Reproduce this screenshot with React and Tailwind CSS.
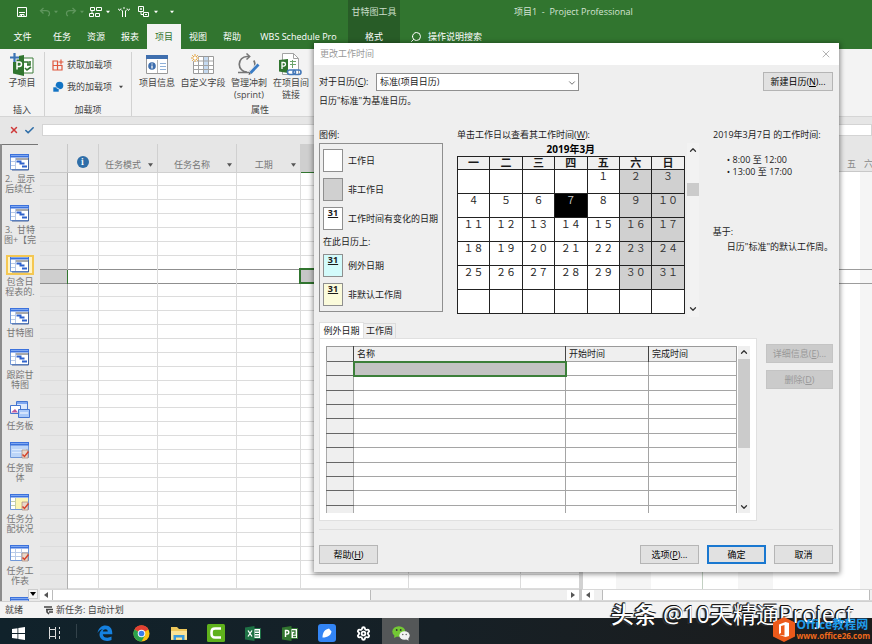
import React, { useState } from 'react'
import clsx from 'clsx'
import { Search, ChevronDown, ChevronUp, X, Check, Settings } from 'lucide-react'

/* ---------- icons ---------- */

function SaveIcon() {
  return (
    <svg width="12" height="12" viewBox="0 0 12 12" fill="none" stroke="#fff">
      <path d="M1.5 1.5h9v9h-9z" />
      <path d="M3 6.5h6M4 8.5h4v2H4z" />
      <path d="M5 9.5h1" />
    </svg>
  )
}

function UndoIcon({ flip }) {
  return (
    <svg width="12" height="10" viewBox="0 0 12 10" fill="none" stroke="#5f965d" strokeWidth="1.3" className={clsx(flip && '-scale-x-100')}>
      <path d="M4.5 1L1.5 3.7l3 2.8M1.8 3.7H7c2 0 3.5 1.3 3.5 3 0 1.2-.6 2-1.5 2.3" />
    </svg>
  )
}

function LinkTasksIcon() {
  return (
    <svg width="13" height="12" viewBox="0 0 13 12" fill="none" stroke="#fff">
      <path d="M1.5 1.5h4v3h-4zM7.5 1.5h5v3h-5zM.5 7.5h4v3h-4zM6.500 7.500h4v3h-4zM3 4.500v3" />
    </svg>
  )
}

function UnlinkIcon() {
  return (
    <svg width="12" height="12" viewBox="0 0 12 12" fill="none" stroke="#fff">
      <path d="M0 2.500l1.500 2L3 2.500M9 2.500l1.500 2 1.500-2M4.500 11V5L3 3.500M7.500 11V5L9 3.500M6 1v2" />
    </svg>
  )
}

function OutlineIcon() {
  return (
    <svg width="12" height="12" viewBox="0 0 12 12" fill="none" stroke="#fff">
      <path d="M.5 .5h5v5h-5zM2 3h2M3 2v2M5.500 6.500h5v4h-5zM3 6v2.500h2M7 8.500h2" />
    </svg>
  )
}

function SubprojectIcon() {
  return (
    <svg width="24" height="24" viewBox="0 0 24 24">
      <path d="M12 5h11v15H12z" fill="#fff" stroke="#3f7f3c" />
      <path d="M14 9h4v3M20 8v4h-3M15 15l2 2 4-3" fill="none" stroke="#31752f" strokeWidth="1.600" />
      <path d="M3 4l11-2v21L3 20.500z" fill="#31752f" />
      <path d="M7 16.500V9h2.300a2.200 2.200 0 010 4.400H7" fill="none" stroke="#fff" strokeWidth="1.500" />
      <path d="M4.500 0v9M0 4.500h9" stroke="#f3f3f3" strokeWidth="4" />
      <path d="M4.500 0v9M0 4.500h9" stroke="#3a73b5" strokeWidth="2.200" />
    </svg>
  )
}

function StoreIcon() {
  return (
    <svg width="12" height="12" viewBox="0 0 12 12" fill="none" stroke="#e0583e" strokeWidth="1.200">
      <path d="M1 2h4.500v9H1zM1 6.500h9V11H1zM9 .5v5M6.500 3h5" />
    </svg>
  )
}

function MyAddinsIcon() {
  return (
    <svg width="12" height="12" viewBox="0 0 12 12" fill="#1273c4">
      <circle cx="7.500" cy="4.500" r="3.800" />
      <path d="M1 6h4v1.500h2V11H1z" stroke="#f3f3f3" strokeWidth=".6" />
    </svg>
  )
}

function ProjectInfoIcon() {
  return (
    <svg width="24" height="22" viewBox="0 0 24 22">
      <path d="M1.500 1.500h21v18h-21z" fill="#fff" stroke="#9a9a9a" />
      <path d="M1 1h22v4H1z" fill="#3f6fae" />
      <circle cx="7" cy="12" r="3.800" fill="#3f6fae" />
      <path d="M7 9.500v1M7 11.500v3" stroke="#fff" strokeWidth="1.300" />
      <path d="M12.500 6v13" stroke="#b5b5b5" />
      <path d="M15 9.500h6M15 12.500h6M15 15.500h6" stroke="#8fb0d8" />
    </svg>
  )
}

function CustomFieldIcon() {
  return (
    <svg width="24" height="22" viewBox="0 0 24 22" fill="none">
      <path d="M2.500 2.500h20v17h-20z" fill="#fff" stroke="#9a9a9a" />
      <path d="M13 3h4.500v16H13z" fill="#c5daf1" />
      <path d="M2.500 7h20M2.500 11.500h20M2.500 15.500h20M7.500 3v16M12.500 3v16M17.500 3v16" stroke="#a3a3a3" />
      <circle cx="4" cy="4" r="3.500" fill="#f3f3f3" />
      <path d="M4 0v8M0 4h8M1.200 1.200l5.600 5.600M6.800 1.200L1.200 6.800" stroke="#e5a33c" />
      <circle cx="4" cy="4" r="1.500" fill="#fff" />
    </svg>
  )
}

function SprintIcon() {
  return (
    <svg width="24" height="23" viewBox="0 0 24 23" fill="none">
      <path d="M12 3.500H10a7.500 7.500 0 000 15.500M12.500 18.500A7.500 7.500 0 0016.800 7.500M1 19.500h14" stroke="#767676" strokeWidth="1.700" />
      <path d="M9.500 .5l3.200 3-3.200 3" stroke="#767676" strokeWidth="1.500" />
      <path d="M13.500 20l8-8.500" stroke="#f3f3f3" strokeWidth="4.500" />
      <path d="M13.500 20l8-8.500" stroke="#3a7cc5" strokeWidth="2.800" />
      <path d="M11.500 22l.800-2.600 1.700 1.600z" fill="#555" />
    </svg>
  )
}

function LinkProjectsIcon() {
  return (
    <svg width="24" height="24" viewBox="0 0 24 24" fill="none">
      <path d="M3.500.500h11l5 5v16h-16z" fill="#fff" stroke="#a3a3a3" />
      <path d="M14.500.500v5h5" stroke="#a3a3a3" />
      <path d="M11 8.500h6M11 11.500h6M13.500 7v8" stroke="#6da46b" />
      <path d="M0 7l9-1v14l-9-1.500z" fill="#31752f" />
      <path d="M3 16V9.500h1.700a1.700 1.700 0 010 3.600H3" stroke="#fff" strokeWidth="1.300" />
      <rect x="8.500" y="17" width="8" height="4.500" rx="2.200" stroke="#4478b8" strokeWidth="1.600" />
      <rect x="14" y="17" width="8" height="4.500" rx="2.200" stroke="#4478b8" strokeWidth="1.600" />
    </svg>
  )
}

function ViewIcon({ kind }) {
  if (kind === 'board') {
    return (
      <svg width="20" height="17" viewBox="0 0 20 17">
        <path d="M6.500.500h11v8h-11z" fill="#dbe8fc" stroke="#4676cf" />
        <path d="M7 1h10v2H7z" fill="#7ea7f0" />
        <path d="M.5 4.500h10v8H.5z" fill="#fff" stroke="#4676cf" />
        <path d="M1 11.500l4-3.500 3 3.500z" fill="#c05a9a" />
        <path d="M8.500 8.500h11v8h-11z" fill="#a9c8f8" stroke="#4676cf" />
        <path d="M10 12h8" stroke="#fff" />
      </svg>
    )
  }
  return (
    <svg width="20" height="17" viewBox="0 0 20 17">
      <path d="M.5.500h18v15H.5z" fill={kind === 'form' ? '#bcd5f8' : '#fff'} stroke="#6f97d8" />
      <path d="M0 0h19v3.500H0z" fill="#3c72dc" />
      <path d="M1 1h17v1H1z" fill="#7ea7f0" />
      {kind === 'gantt' && (
        <>
          <path d="M5.500 4v11M1 7.500h4M1 11.500h4" stroke="#b9cbe8" />
          <path d="M6 5h12" stroke="#555" />
          <path d="M6.500 7.500h5M9.500 9.500h5M12 12.500h5" stroke="#2f62cc" strokeWidth="2" />
          <path d="M18.500 4v12H2" fill="none" stroke="#44639e" />
        </>
      )}
      {kind === 'form' && <path d="M2 7.500h14M2 10.500h10" stroke="#dceafd" />}
      {kind === 'usage' && (
        <>
          <path d="M6 4h12v11H6z" fill="#fcf6b4" />
          <path d="M5.500 4v11M1 7.500h4M1 11.500h4" stroke="#c4cfa8" />
        </>
      )}
      {kind === 'sheet' && <path d="M5.500 4v11M11.500 4v11M1 7.500h17M1 11.500h17" stroke="#b9cbe8" />}
      {kind !== 'gantt' && (
        <>
          <path d="M12 8h6v8h-6z" fill="#e9d8cb" stroke="#9d7a66" strokeWidth=".6" />
          <path d="M12.500 12.500l2 2 4-5" fill="none" stroke="#d5432c" strokeWidth="1.500" />
        </>
      )}
    </svg>
  )
}

function Caret({ className }) {
  return (
    <svg width="6" height="4" viewBox="0 0 6 4" fill="currentColor" className={className}>
      <path d="M0 0h6L3 4z" />
    </svg>
  )
}

function SideArrow({ left }) {
  return (
    <svg width="4" height="6" viewBox="0 0 4 6" fill="#555">
      <path d={left ? 'M4 0v6L0 3z' : 'M0 0v6l4-3z'} />
    </svg>
  )
}

/* ---------- data ---------- */

const TABS = ['任务', '资源', '报表', '项目', '视图', '帮助']

const VIEWS = [
  { kind: 'gantt', label: '2.  显示\n后续任.' },
  { kind: 'gantt', label: '3.  甘特\n图+【完' },
  { kind: 'gantt', label: '包含日\n程表的.', active: true },
  { kind: 'gantt', label: '甘特图' },
  { kind: 'gantt', label: '跟踪甘\n特图' },
  { kind: 'board', label: '任务板' },
  { kind: 'form', label: '任务窗\n体' },
  { kind: 'usage', label: '任务分\n配状况' },
  { kind: 'sheet', label: '任务工\n作表' },
]

const WEEKDAYS = ['一', '二', '三', '四', '五', '六', '日']

// March 2019 starts on a Friday
const WEEKS = Array.from({ length: 6 }, (_, w) =>
  Array.from({ length: 7 }, (_, d) => {
    const day = w * 7 + d - 3
    return day >= 1 && day <= 31 ? day : null
  })
)

/* ---------- main window ---------- */

function TitleBar() {
  return (
    <div className="flex h-6 items-stretch">
      <div className="flex w-[348px] items-center pl-4 text-white">
        <button aria-label="保存" className="mr-[11px]"><SaveIcon /></button>
        <button aria-label="撤消" className="mr-[7px] flex items-center gap-[3px] text-[#5f965d]"><UndoIcon /><Caret className="w-1" /></button>
        <button aria-label="恢复" className="mr-[5px] flex items-center gap-[3px] text-[#5f965d]"><UndoIcon flip /><Caret className="w-1" /></button>
        <button aria-label="链接任务" className="mr-2 flex items-center gap-1"><LinkTasksIcon /><Caret className="w-1" /></button>
        <button aria-label="取消链接" className="mr-2"><UnlinkIcon /></button>
        <button aria-label="大纲" className="mr-3 flex items-center gap-1"><OutlineIcon /><Caret className="w-1" /></button>
        <button aria-label="自定义工具栏"><Caret className="w-1" /></button>
      </div>
      <div className="flex w-[52px] items-center justify-center whitespace-nowrap bg-[#285c27] text-[#c9dcc8]">甘特图工具</div>
      <div className="flex flex-1 items-center pl-[114px] text-[#d5e4d4]">项目1&nbsp; -&nbsp; Project Professional</div>
    </div>
  )
}

function RibbonTabs() {
  return (
    <div className="flex h-[25px] items-stretch text-white">
      <button className="w-[45px]">文件</button>
      {TABS.map(t => (
        <button key={t} className={clsx('w-[34px]', t === '项目' && 'bg-[#f3f3f3] text-[#31752f]')}>{t}</button>
      ))}
      <button className="w-[99px] whitespace-nowrap">WBS Schedule Pro</button>
      <button className="w-[52px] bg-[#285c27]">格式</button>
      <button className="flex items-center gap-1.5 pl-2.5">
        <Search size={12} className="-scale-x-100" />
        操作说明搜索
      </button>
    </div>
  )
}

function RibbonButton({ icon, label, className }) {
  return (
    <button className={clsx('flex flex-col items-center leading-3', className)}>
      <span className="flex h-[25px] items-center">{icon}</span>
      <span className="whitespace-pre">{label}</span>
    </button>
  )
}

function Ribbon() {
  return (
    <div className="flex h-[68px] items-stretch border-b border-[#d5d5d5] bg-[#f3f3f3] pt-[3px] text-[#444]">
      <div className="flex w-[45px] flex-col items-center justify-between border-r border-[#d2d2d2]">
        <RibbonButton icon={<SubprojectIcon />} label="子项目" />
        <div className="leading-3">插入</div>
      </div>
      <div className="flex w-[87px] flex-col justify-between border-r border-[#d2d2d2]">
        <div className="flex flex-col gap-2.5 pl-[7px] pt-[7px]">
          <button className="flex items-center gap-[3px] leading-3"><StoreIcon />获取加载项</button>
          <button className="flex items-center gap-[3px] leading-3"><MyAddinsIcon />我的加载项<Caret className="ml-1 w-1" /></button>
        </div>
        <div className="text-center leading-3">加载项</div>
      </div>
      <div className="flex w-[256px] flex-col justify-between">
        <div className="flex items-start pl-[3px]">
          <RibbonButton className="w-11" icon={<ProjectInfoIcon />} label="项目信息" />
          <RibbonButton className="w-12" icon={<CustomFieldIcon />} label="自定义字段" />
          <RibbonButton className="w-11" icon={<SprintIcon />} label={'管理冲刺\n(sprint)'} />
          <RibbonButton className="w-10" icon={<LinkProjectsIcon />} label={'在项目间\n链接'} />
        </div>
        <div className="text-center leading-3">属性</div>
      </div>
    </div>
  )
}

function ViewBar() {
  return (
    <nav className="relative flex w-10 flex-col overflow-hidden border-l-2 border-[#8c8c8c] bg-[#e9e9e9] text-[#777]">
      <div className="mr-0.5 flex flex-1 flex-col items-center justify-between border-t border-[#777] pt-[9px]">
        {VIEWS.map(v => (
          <button key={v.label} className="flex flex-col items-center leading-[10px]">
            <span className={clsx('mb-1 flex h-4 items-center px-0.5', v.active && 'bg-[#fff3c4] outline-2 outline-[#f4c752]')}>
              <ViewIcon kind={v.kind} />
            </span>
            <span className="whitespace-pre">{v.label}</span>
          </button>
        ))}
        {/* next entry, cut off by the window edge */}
        <div className="h-1 w-5 overflow-hidden"><ViewIcon kind="sheet" /></div>
      </div>
      <button aria-label="更多视图" className="absolute bottom-0.5 right-0.5 flex size-2.5 items-center justify-center border border-[#ccc] bg-[#f5f5f5] text-black">
        <Caret />
      </button>
    </nav>
  )
}

function TaskTable() {
  const heads = ['任务模式', '任务名称', '工期']
  return (
    <table className="h-full w-full table-fixed border-collapse bg-white">
      <colgroup>
        <col className="w-[27px]" />
        <col className="w-[31px]" />
        <col className="w-[59px]" />
        <col className="w-[79px]" />
        <col className="w-16" />
        <col className="w-[108px]" />
        <col className="w-28" />
        <col />
      </colgroup>
      <thead>
        <tr className="h-7 bg-[#e6e6e6] align-bottom text-[#777]">
          <th className="border-b border-[#c8c8c8]" />
          <th className="border-b border-l border-[#c8c8c8] pb-1">
            <span className="mx-auto flex size-3 items-center justify-center rounded-full bg-[#2f6ea8] font-serif text-[9px] font-bold leading-3 text-white">i</span>
          </th>
          {heads.map(h => (
            <th key={h} className="border-b border-l border-[#d0d0d0] font-normal">
              <div className="flex items-center justify-between pb-px pr-1 leading-3">
                <span className="flex-1 whitespace-nowrap text-center">{h}</span>
                <Caret className="w-[5px] text-[#555]" />
              </div>
            </th>
          ))}
          <th className="border-b border-b-[#31752f] bg-[#cfcfcf]" />
          <th className="border-b border-l border-[#d0d0d0]" />
          <th className="border-b border-l border-[#d0d0d0]" />
        </tr>
      </thead>
      <tbody>
        {Array.from({ length: 30 }, (_, r) => {
          const active = r === 7
          return (
            <tr key={r} className={clsx('border-b', active || r === 6 ? 'border-[#8f8f8f]' : 'border-[#dcdcdc]')}>
              <td className={clsx('border-r p-0', active ? 'border-r-[#31752f] bg-[#cfcfcf]' : 'border-r-[#b0b0b0] bg-[#e6e6e6]')} />
              {Array.from({ length: 4 }, (_, c) => <td key={c} className="border-r border-r-[#dcdcdc] p-0" />)}
              <td className={clsx('border-r border-r-[#dcdcdc] p-0', active && 'bg-[#c6c6c6] outline-2 -outline-offset-1 outline-[#31752f]')} />
              <td className="border-r border-r-[#dcdcdc] p-0" />
              <td className="p-0" />
            </tr>
          )
        })}
      </tbody>
    </table>
  )
}

function Timeline() {
  // week / weekend stripes under the day header
  return (
    <div className="flex flex-1 flex-col border-l-4 border-[#d2d2d2] bg-white">
      <div className="flex h-7 items-end justify-end gap-2 overflow-hidden border-b border-[#c8c8c8] bg-[#e6e6e6] pb-px leading-3 text-[#888]">
        <span>五</span>
        <span className="-mr-px">六</span>
      </div>
      <div className="relative flex flex-1">
        <div className="w-[33px]" />
        <div className="w-[35px] bg-[#f5f5f5]" />
        <div className="w-[52px] border-r border-[#c2d0c2]" />
        <div className="w-[35px]" />
        <div className="w-[35px] bg-[#f5f5f5]" />
        <div className="flex-1" />
        <div className="w-3 bg-[#f5f5f5]" />
        <div className="absolute inset-x-0 top-[97px] h-[15px] border-y border-[#9c9c9c]" />
      </div>
    </div>
  )
}

function HScroll() {
  return (
    <div className="flex h-3 items-stretch bg-[#f0f0f0]">
      <div className="flex w-[539px] border-y border-[#d8d8d8]">
        <button aria-label="向左滚动" className="flex w-3 items-center justify-center bg-white"><SideArrow left /></button>
        <div className="w-[319px] border border-y-0 border-[#bbb] bg-white" />
        <div className="flex-1" />
        <button aria-label="向右滚动" className="flex w-3 items-center justify-center bg-white"><SideArrow /></button>
      </div>
      <div className="w-[3px] bg-[#c8c8c8]" />
      <div className="flex flex-1 border-y border-[#d8d8d8] pr-[2px]">
        <button aria-label="向左滚动" className="flex w-3 items-center justify-center bg-white"><SideArrow left /></button>
        <div className="ml-2 flex-1 border border-y-0 border-[#bbb] bg-white" />
      </div>
    </div>
  )
}

/* ---------- dialog ---------- */

function DialogButton({ children, primary, className, ...rest }) {
  return (
    <button
      className={clsx(
        'flex h-[19px] items-center justify-center whitespace-nowrap bg-[#e1e1e1] text-black disabled:border-[#c4c4c4] disabled:bg-[#cbcbcb] disabled:text-[#999]',
        primary ? 'border-2 border-[#1a78d0]' : 'border border-[#b5b5b5]',
        className
      )}
      {...rest}
    >
      {children}
    </button>
  )
}

function LegendRow({ color, mark, children }) {
  return (
    <div className="flex items-center gap-[5px] whitespace-nowrap">
      <span className={clsx('flex h-[23px] w-5 items-start justify-center border border-[#8f8f8f] font-bold leading-[10px] underline', color)}>
        {mark && '31'}
      </span>
      {children}
    </div>
  )
}

function Calendar() {
  const [selected, setSelected] = useState(7)
  return (
    <table className="w-[228px] table-fixed border-collapse text-center" aria-labelledby="cal-label">
      <caption className="h-[13px] text-[10px] font-bold leading-[13px] text-black">2019年3月</caption>
      <thead>
        <tr className="h-[13px]">
          {WEEKDAYS.map(d => (
            <th key={d} className="border border-[#222] p-0 text-[11px] font-bold leading-3">{d}</th>
          ))}
        </tr>
      </thead>
      <tbody>
        {WEEKS.map((week, w) => (
          <tr key={w} className="h-6">
            {week.map((day, d) => (
              <td
                key={d}
                onClick={() => day && setSelected(day)}
                className={clsx(
                  "border border-[#222] p-0 align-top font-['Noto_Sans_CJK_SC',sans-serif] text-[10px] leading-[11px] [font-feature-settings:'fwid']",
                  day && day === selected ? 'bg-black text-[#ccc]' : day && d > 4 ? 'bg-[#d0d0d0] text-[#333]' : 'bg-white text-[#222]'
                )}
              >
                {day}
              </td>
            ))}
          </tr>
        ))}
      </tbody>
    </table>
  )
}

function ExceptionTable() {
  return (
    <div className="h-[167px] flex-1 overflow-hidden">
      <table className="h-[174px] w-full table-fixed border-collapse bg-white text-left">
        <colgroup>
          <col className="w-[27px]" />
          <col />
          <col className="w-[83px]" />
          <col className="w-[88px]" />
        </colgroup>
        <thead>
          <tr className="h-[15px] border border-[#9a9a9a] bg-[#efefef] leading-[14px]">
            <th className="p-0" />
            {['名称', '开始时间', '完成时间'].map(h => (
              <th key={h} className="border-l border-[#444] py-0 pl-[3px] pr-0 align-bottom font-normal">{h}</th>
            ))}
          </tr>
        </thead>
        <tbody>
          {Array.from({ length: 11 }, (_, r) => (
            <tr key={r}>
              <td className="border border-x-[#aaa] border-y-[#666] bg-[#efefef] p-0" />
              <td className={clsx('border border-[#a5a5a5] p-0', r === 0 && 'bg-[#c3c3c3] outline-2 -outline-offset-1 outline-[#3c7f3a]')} />
              <td className="border border-[#a5a5a5] p-0" />
              <td className="border border-[#a5a5a5] p-0" />
            </tr>
          ))}
        </tbody>
      </table>
    </div>
  )
}

function ChangeTimeDialog() {
  return (
    <div role="dialog" aria-label="更改工作时间" className="absolute left-[314px] top-[43px] flex w-[525px] flex-col bg-[#efefef] pb-2 leading-3 text-[#1a1a1a] shadow-[0_1px_5px_1px_rgba(0,0,0,0.45)]">
      <div className="flex h-[22px] items-center justify-between bg-white pl-1.5 pr-[7px] text-[#999]">
        更改工作时间
        <button aria-label="关闭"><X size={12} strokeWidth={1.5} /></button>
      </div>

      <div className="flex flex-col pl-[5px] pr-1.5 pt-[7px]">
        <div className="flex h-[19px] items-center">
          <label htmlFor="base-cal" className="w-[57px] whitespace-nowrap">对于日历(<u>C</u>):</label>
          <div className="relative">
            <select id="base-cal" className="h-[18px] w-[203px] appearance-none border border-[#8f8f8f] bg-white pl-[3px] leading-3">
              <option>标准(项目日历)</option>
            </select>
            <ChevronDown size={10} strokeWidth={2} className="pointer-events-none absolute right-0.5 top-[5px] text-[#555]" />
          </div>
          <DialogButton className="ml-auto w-[70px]">新建日历(<u>N</u>)...</DialogButton>
        </div>
        <p className="mt-1">日历"标准"为基准日历。</p>

        <div className="mt-[22px] flex whitespace-nowrap">
          <div className="w-[138px]">图例:</div>
          <div id="cal-label" className="w-[256px]">单击工作日以查看其工作时间(<u>W</u>):</div>
          <div>2019年3月7日 的工作时间:</div>
        </div>

        <div className="mt-0.5 flex h-[174px] items-start">
          <div className="flex h-[169px] w-[124px] flex-col gap-1.5 border border-[#8f8f8f] pl-[3px] pt-[5px]">
            <LegendRow color="bg-white">工作日</LegendRow>
            <LegendRow color="bg-[#d0d0d0]">非工作日</LegendRow>
            <LegendRow color="bg-white" mark>工作时间有变化的日期</LegendRow>
            <div>在此日历上:</div>
            <LegendRow color="bg-[#d3fbfb]" mark>例外日期</LegendRow>
            <LegendRow color="bg-[#fbfbdb]" mark>非默认工作周</LegendRow>
          </div>
          <div className="ml-3.5"><Calendar /></div>
          <div className="ml-0.5 flex h-full w-3 flex-col items-center bg-[#f2f2f2] text-[#333]">
            <ChevronUp size={10} strokeWidth={3} className="mt-0.5" />
            <div className="mt-7 h-[13px] w-full bg-[#cbcbcb]" />
            <ChevronDown size={10} strokeWidth={3} className="mb-[3px] mt-auto" />
          </div>
          <div className="ml-3.5 whitespace-nowrap">
            <ul className="ml-3.5 mt-[11px]">
              <li>• 8:00 至 12:00</li>
              <li>• 13:00 至 17:00</li>
            </ul>
            <div className="mt-12">基于:</div>
            <div className="ml-3.5 mt-[3px]">日历"标准"的默认工作周。</div>
          </div>
        </div>

        <div role="tablist" className="mt-[5px] flex h-4 items-end whitespace-nowrap">
          <button role="tab" aria-selected="true" className="h-full w-[45px] border border-b-0 border-[#e0e0e0] bg-white">例外日期</button>
          <button role="tab" aria-selected="false" className="h-[15px] w-8 border border-b-0 border-l-0 border-[#dcdcdc]">工作周</button>
        </div>
        <div className="flex items-start justify-between">
          <div className="flex h-[183px] w-[438px] items-start border border-[#e0e0e0] bg-white pl-1.5 pr-1.5 pt-[7px]">
            <ExceptionTable />
            <div className="ml-px flex h-[167px] w-3 flex-col items-center bg-[#efefef] text-[#333]">
              <ChevronUp size={10} strokeWidth={3} className="mb-0.5 mt-px" />
              <div className="h-[89px] w-full bg-[#cbcbcb]" />
              <ChevronDown size={10} strokeWidth={3} className="mb-px mt-auto" />
            </div>
          </div>
          <div className="mt-1.5 flex w-[67px] flex-col gap-[7px]">
            <DialogButton disabled>详细信息(<u>E</u>)...</DialogButton>
            <DialogButton disabled>删除(<u>D</u>)</DialogButton>
          </div>
        </div>

        <div className="mt-2 flex gap-2 border-t border-[#dedede] pt-[15px]">
          <DialogButton className="mr-auto w-[59px]">帮助(<u>H</u>)</DialogButton>
          <DialogButton className="w-[59px]">选项(<u>P</u>)...</DialogButton>
          <DialogButton primary className="w-[59px]">确定</DialogButton>
          <DialogButton className="w-[59px]">取消</DialogButton>
        </div>
      </div>
    </div>
  )
}

/* ---------- task bar ---------- */

function EdgeIcon() {
  return (
    <svg width="16" height="16" viewBox="0 0 16 16">
      <path
        fillRule="evenodd"
        d="M.5 8C1.500 3 4.500.500 8.500.500c4.500 0 7 3.300 6.800 8.700H5.800c.2 3.600 5 4.500 8.700 2.400V15C9 17.300 2.500 15 2.500 9.500 2.500 7 4 5 6 4 3.500 4.500 1.800 5.800.500 8zM5.800 6.500h5C10.700 3.500 6.300 3.500 5.800 6.500z"
        fill="#1581e0"
      />
    </svg>
  )
}

function ChromeIcon() {
  return (
    <svg width="17" height="17" viewBox="0 0 18 18">
      <circle cx="9" cy="9" r="8.500" fill="#fbc116" />
      <path d="M9 9L1.600 4.700A8.500 8.500 0 0116.400 4.700z" fill="#e24033" />
      <path d="M9 9L1.600 4.700A8.500 8.500 0 009 17.500l3.500-6z" fill="#2ba24c" />
      <circle cx="9" cy="9" r="4" fill="#fff" />
      <circle cx="9" cy="9" r="3" fill="#3b7ded" />
    </svg>
  )
}

const TASKBAR = [
  { name: 'Edge', icon: <EdgeIcon /> },
  { name: 'Chrome', icon: <ChromeIcon /> },
  {
    name: '文件资源管理器',
    icon: (
      <svg width="18" height="15" viewBox="0 0 18 15">
        <path d="M1 1h6l2 2h8v11H1z" fill="#eec75a" />
        <path d="M1 5h16v8.500H1z" fill="#fbe396" />
        <path d="M3.500 14V9h11v5H12v-2.500H6V14z" fill="#3a9bdc" />
      </svg>
    ),
  },
  {
    name: 'Camtasia',
    icon: (
      <svg width="18" height="18" viewBox="0 0 18 18">
        <rect width="18" height="18" rx="1.500" fill="#5fb11c" />
        <path d="M14 4.500H8C5.500 4.500 4.500 5.500 4.500 9s1 4.500 3.500 4.500h6" fill="none" stroke="#fff" strokeWidth="2.600" />
      </svg>
    ),
  },
  {
    name: 'Excel',
    icon: (
      <svg width="16" height="15" viewBox="0 0 16 15">
        <path d="M8.500 2.500h7v10h-7z" fill="#fff" stroke="#1e7145" />
        <path d="M10 5h4M10 7.500h4M10 10h4" stroke="#1e7145" />
        <path d="M0 1.500L9.500 0v15L0 13.500z" fill="#1e7145" />
        <path d="M3 4.500l4 6M7 4.500l-4 6" stroke="#fff" strokeWidth="1.300" />
      </svg>
    ),
  },
  {
    name: 'Project',
    icon: (
      <svg width="16" height="15" viewBox="0 0 16 15">
        <path d="M8.500 2.500h7v10h-7z" fill="#fff" stroke="#31752f" />
        <path d="M10 5h3v3h-2M11 10.500h3" fill="none" stroke="#31752f" strokeWidth="1.300" />
        <path d="M0 1.500L9.500 0v15L0 13.500z" fill="#31752f" />
        <path d="M3.500 11V4.500H5a1.800 1.800 0 010 3.600H3.500" fill="none" stroke="#fff" strokeWidth="1.400" />
      </svg>
    ),
  },
  {
    name: '便笺',
    icon: (
      <svg width="18" height="18" viewBox="0 0 18 18">
        <rect width="18" height="18" rx="3" fill="#3385f5" />
        <path d="M4.500 13.500C4.500 8 7 5.500 11 4.500l2.500 3c-.5 3.500-3.500 6-9 6z" fill="#fff" />
      </svg>
    ),
  },
  { name: '设置', icon: <Settings size={15} strokeWidth={3} color="#fff" /> },
  {
    name: '微信',
    active: true,
    icon: (
      <svg width="18" height="15" viewBox="0 0 18 15">
        <ellipse cx="6.800" cy="5.500" rx="6.500" ry="5.300" fill="#73c834" />
        <path d="M2.500 9l-.5 3 3-1.500z" fill="#73c834" />
        <circle cx="4.700" cy="4" r=".9" fill="#333" />
        <circle cx="8.700" cy="4" r=".9" fill="#333" />
        <ellipse cx="12.500" cy="9.500" rx="5.200" ry="4.300" fill="#f2f2f2" />
        <path d="M14 13l2.500 1.700-.300-3z" fill="#f2f2f2" />
        <circle cx="10.800" cy="8.500" r=".7" fill="#555" />
        <circle cx="14.200" cy="8.500" r=".7" fill="#555" />
      </svg>
    ),
  },
]

function TaskBar() {
  return (
    <div className="flex h-[26px] items-stretch bg-linear-to-r from-[#10222b] via-[#162026] to-[#1c1c1c]">
      <button aria-label="开始" className="flex w-9 items-center justify-center pt-1">
        <svg width="13" height="13" viewBox="0 0 13 13" fill="#fff">
          <path d="M0 2l5.500-.800V6H0zM6.300 1L13 0v6H6.300zM0 7h5.500v4.800L0 11zM6.300 7H13v6l-6.700-1z" />
        </svg>
      </button>
      <button aria-label="任务视图" className="flex w-9 items-center justify-center pt-1">
        <svg width="13" height="12" viewBox="0 0 13 12" fill="none" stroke="#ddd">
          <path d="M1.500 0v2.500h6V0M1.500 12V9.500h6V12M1.500 2.500v7M7.500 2.500v7M11.500 0v2M11.500 4v3M11.500 9v3" />
        </svg>
      </button>
      <div className="my-1.5 ml-1 mr-[9px] w-px bg-[#33424a]" />
      {TASKBAR.map(t => (
        <button key={t.name} aria-label={t.name} className={clsx('flex w-[37px] items-center justify-center pt-1', t.active && 'bg-[#545758]')}>
          {t.icon}
        </button>
      ))}
    </div>
  )
}

function Watermark() {
  return (
    <div className="pointer-events-none absolute bottom-0 right-0 h-[46px] w-[261px]">
      <div className="absolute left-0 top-0 whitespace-nowrap text-[23px] leading-8 text-white [text-shadow:-1px_-1px_0_#111,-1px_0_0_#111,0_-1px_0_#111,-2px_1px_1px_#333]">
        <b className="font-medium">头条</b> @10天精通Project
      </div>
      <div className="absolute bottom-0.5 right-0.5 flex items-center gap-px">
        <svg width="22" height="25" viewBox="0 0 22 25">
          <path d="M11 0l11 5.500v14L11 25 0 19.500v-14z" fill="#ec5a1b" />
          <path d="M6 7.500l6.500-2.500L16 6v13l-3.500 1L6 17.800l5.500.700V8L8 9v7l-2 1z" fill="#fff" />
        </svg>
        <div className="whitespace-nowrap font-bold">
          <div className="text-[12px] leading-3 text-[#1f9bea]">Office教程网</div>
          <div className="text-[8px] leading-[9px] text-[#f06a1c]">www.office26.com</div>
        </div>
      </div>
    </div>
  )
}

export default function App() {
  return (
    <div className="relative flex h-screen flex-col overflow-hidden bg-[#e6e6e6] font-['Open_Sans','Noto_Sans_CJK_SC',sans-serif] text-[9px]">
      <header className="bg-[#31752f]">
        <TitleBar />
        <RibbonTabs />
      </header>
      <Ribbon />

      {/* entry bar */}
      <div className="flex h-[19px] shrink-0 items-center bg-[#e6e6e6] pt-[7px]">
        <div className="ml-1.5 flex h-3 w-8 items-center justify-around">
          <button aria-label="取消输入"><X size={10} strokeWidth={3.5} color="#cf3a3a" /></button>
          <button aria-label="确认输入"><Check size={11} strokeWidth={3.5} color="#2f6ea8" /></button>
        </div>
        <input aria-label="输入栏" className="ml-1 h-3 min-w-0 flex-1 border border-[#d4d4d4] bg-white" />
      </div>

      <main className="flex min-h-0 flex-1 pt-2">
        <ViewBar />
        <div className="flex min-w-0 flex-1 flex-col">
          <div className="flex min-h-0 flex-1">
            <div className="w-[539px] overflow-hidden"><TaskTable /></div>
            <Timeline />
          </div>
          <HScroll />
        </div>
      </main>

      <footer>
        <div className="flex h-[17px] items-center border-t border-[#d0d0d0] bg-[#f3f3f3] pl-[5px] leading-3 text-[#444]">
          <span className="w-[39px]">就绪</span>
          <svg width="10" height="9" viewBox="0 0 10 9" fill="none" stroke="#444" className="mr-0.5">
            <path d="M0 1h8M2 3.500h7M5 6h4M3 3v3l2 2" strokeWidth="1.600" />
          </svg>
          新任务: 自动计划
        </div>
        <TaskBar />
      </footer>

      <ChangeTimeDialog />
      <Watermark />
    </div>
  )
}
